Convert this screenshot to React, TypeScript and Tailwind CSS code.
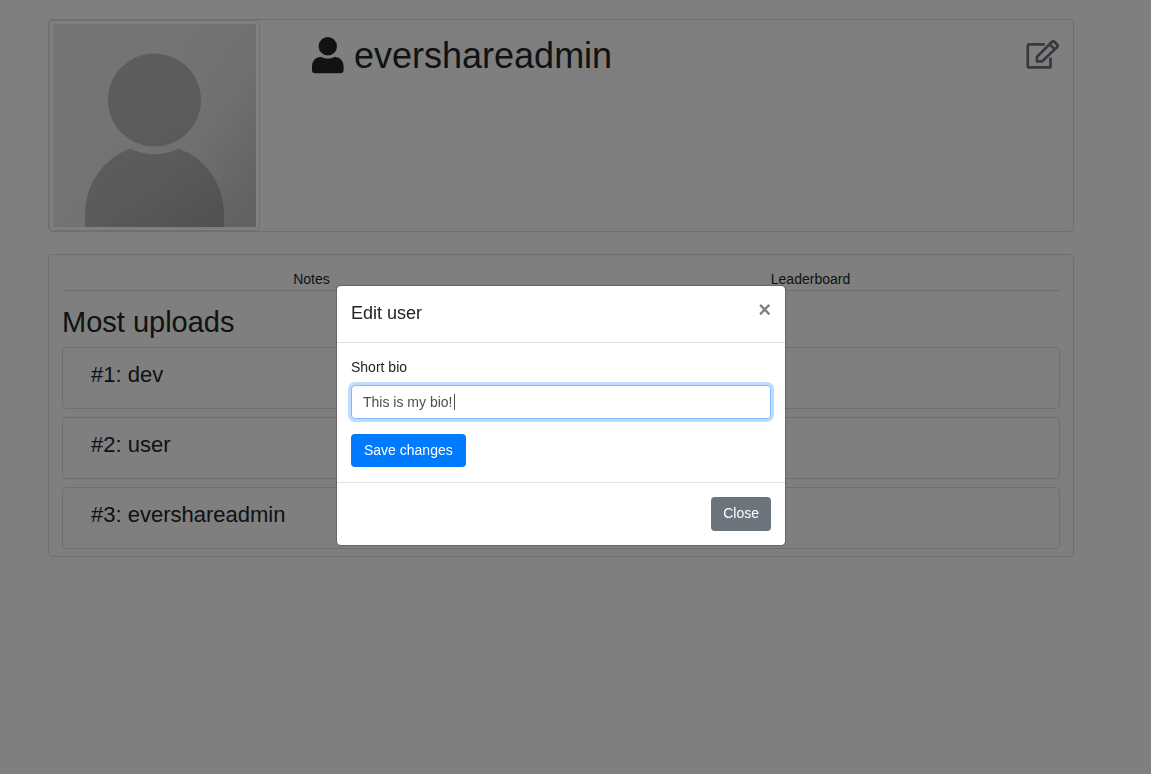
const leaders = ["dev", "user", "evershareadmin"];

function Avatar() {
  return (
    <svg viewBox="0 0 203 203" role="img" aria-label="Profile picture" className="block size-[203px]">
      <defs>
        <linearGradient id="backdrop" x1="0" y1="0.1" x2="1" y2="0.8">
          <stop offset="0.4" stopColor="#e8e8e8" />
          <stop offset="0.7" stopColor="#dfe0e2" />
          <stop offset="1" stopColor="#c6c6c6" />
        </linearGradient>
        <linearGradient id="person" gradientUnits="userSpaceOnUse" x1="50" y1="30" x2="171" y2="203">
          <stop offset="0" stopColor="#bbbbbc" />
          <stop offset="0.6" stopColor="#b5b6b8" />
          <stop offset="1" stopColor="#a1a1a1" />
        </linearGradient>
      </defs>
      <rect width="203" height="203" fill="url(#backdrop)" />
      <circle cx="101.5" cy="76" r="46.5" fill="url(#person)" />
      <path d="M32 203V189.500A69.500 69.500 0 0 1 77 124.500A54.500 54.500 0 0 0 126 124.500A69.500 69.500 0 0 1 171 189.500V203Z" fill="url(#person)" />
    </svg>
  );
}

function UserIcon() {
  return (
    <svg viewBox="0 0 32 36" aria-hidden="true" fill="currentColor" className="h-9 w-8 overflow-visible">
      <circle cx="15.8" cy="8.2" r="9.2" />
      <path d="M0 32V28.500C0 23 3.600 19 8.500 19H9.500C13.200 21 18.400 21 22.100 19H23C28 19 31.600 23 31.600 28.500V32A3.200 3.200 0 0 1 28.400 35.200H3.200A3.200 3.200 0 0 1 0 32Z" />
    </svg>
  );
}

function EditIcon() {
  return (
    <svg
      viewBox="0 0 33 29"
      aria-hidden="true"
      fill="none"
      stroke="currentColor"
      strokeWidth="2.7"
      strokeLinejoin="round"
      className="h-[29px] w-[33px] overflow-visible"
    >
      <path d="M18.800 4.300H3A1.200 1.200 0 0 0 1.800 5.500V26.200A1.200 1.200 0 0 0 3 27.400H23.300A1.200 1.200 0 0 0 24.500 26.200V17.500" />
      <path d="M10.900 21.400V17L25.500 2.300Q27.200 0.700 28.900 2.300L30.700 4.200Q32.300 5.900 30.700 7.500L16 21.400Z" />
      <path d="M23.600 4.400L28.800 9.400" />
    </svg>
  );
}

function ProfileCard() {
  return (
    <section className="flex rounded border border-[#dfdfdf] bg-white">
      <div className="rounded border border-[#dee2e6] bg-white p-[3px]">
        <Avatar />
      </div>
      <div className="flex flex-1 items-start justify-between pt-3.5 pr-3.5 pl-[52px]">
        <h1 className="flex items-center gap-2.5 text-[36px] leading-[43px]">
          <UserIcon />
          evershareadmin
        </h1>
        <button type="button" aria-label="Edit user" className="mt-1.5 text-[#6c757d]">
          <EditIcon />
        </button>
      </div>
    </section>
  );
}

function StatsCard() {
  return (
    <section className="rounded border border-[#dfdfdf] bg-white px-[13px] pt-3.5 pb-[7px]">
      <nav className="grid grid-cols-2 border-b border-[#dfdfdf] text-center">
        <a href="#notes">Notes</a>
        <a href="#leaderboard">Leaderboard</a>
      </nav>
      <h2 className="mt-3.5 mb-[7px] text-[29px] leading-[35px]">Most uploads</h2>
      <ol className="flex flex-col gap-2">
        {leaders.map((name, i) => (
          <li key={name} className="h-[62px] rounded border border-[#dfdfdf] px-7 pt-3.5 text-[22px] leading-[26px]">
            #{i + 1}: {name}
          </li>
        ))}
      </ol>
    </section>
  );
}

function EditDialog() {
  return (
    <div className="fixed inset-0 flex items-start justify-center overflow-auto bg-black/50 pt-[285px] pr-[29px]">
      <div
        role="dialog"
        aria-modal="true"
        aria-labelledby="dialog-title"
        className="w-full max-w-[450px] rounded-[5px] border border-black/20 bg-white bg-clip-padding"
      >
        <header className="flex items-start justify-between border-b border-[#dee2e6] px-3.5 pt-[13px] pb-[15px]">
          <h5 id="dialog-title" className="text-lg leading-7">Edit user</h5>
          <button type="button" aria-label="Close dialog" className="text-[22px] leading-[22px] font-bold text-black/50">
            ×
          </button>
        </header>
        <form className="px-3.5 pt-3.5 pb-[15px]" onSubmit={(e) => e.preventDefault()}>
          <label htmlFor="bio" className="mb-[7px] block">Short bio</label>
          <div className="relative mb-[15px]">
            <input
              id="bio"
              type="text"
              defaultValue="This is my bio!"
              className="block h-[34px] w-full rounded border border-[#80bdff] bg-white px-[11px] text-[#495057] caret-transparent ring-3 ring-[#bfdeff] outline-none"
            />
            <span aria-hidden="true" className="absolute top-[9px] left-[103px] h-4 w-px bg-[#495057]" />
          </div>
          <button type="submit" className="block h-[33px] rounded bg-[#007bff] px-[13px] text-white">
            Save changes
          </button>
        </form>
        <footer className="flex justify-end border-t border-[#dee2e6] p-3.5">
          <button type="button" className="h-[34px] rounded bg-[#6c757d] px-3 pb-0.5 text-white">
            Close
          </button>
        </footer>
      </div>
    </div>
  );
}

export default function App() {
  return (
    <div className="min-h-screen bg-white pr-[29px] font-['Liberation_Sans',Arial,sans-serif] text-sm leading-[21px] text-[#212529]">
      <main className="mx-auto flex max-w-[1026px] flex-col gap-[22px] pt-[19px]">
        <ProfileCard />
        <StatsCard />
      </main>
      <EditDialog />
    </div>
  );
}
